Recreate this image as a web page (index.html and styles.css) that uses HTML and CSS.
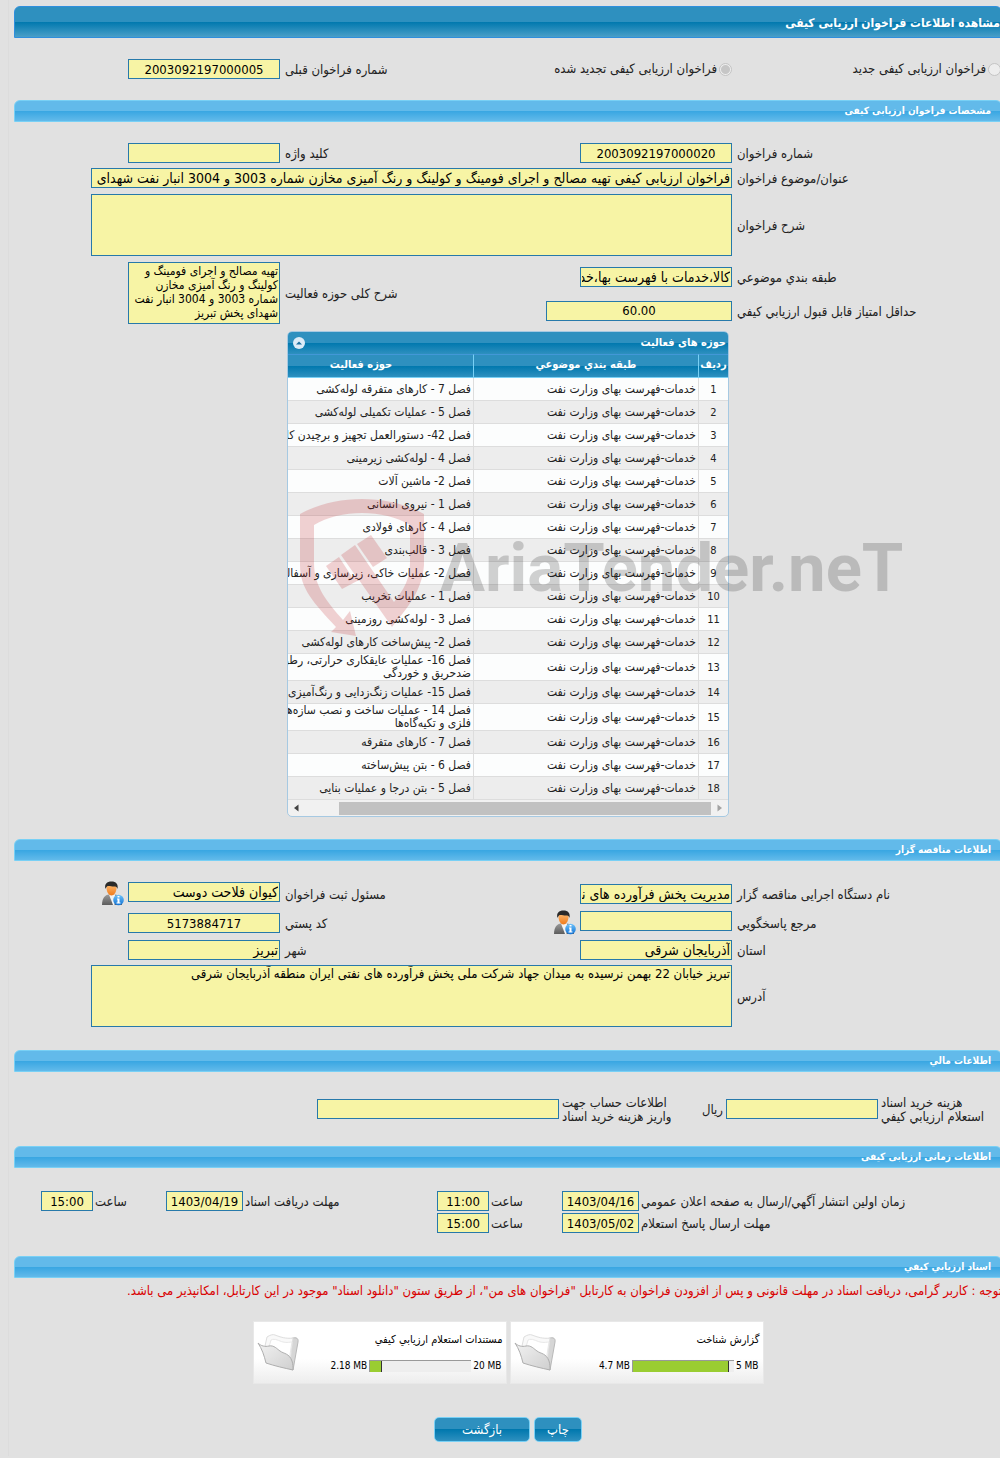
FILE: index.html
```html
<!DOCTYPE html>
<html lang="fa" dir="rtl">
<head>
  <meta charset="UTF-8" />
  <meta name="viewport" content="width=device-width, initial-scale=1.0"/>
  <title>مشاهده اطلاعات فراخوان ارزیابی کیفی</title>
  <link rel="stylesheet" href="styles.css">
</head>
<body>
  <svg class="defs" aria-hidden="true">
    <defs>
      <linearGradient id="g-folder" x1="0" y1="0" x2="1" y2="1">
        <stop offset="0" stop-color="#f2f2f2"/><stop offset="1" stop-color="#cfcfcf"/>
      </linearGradient>
      <linearGradient id="g-face" x1="0" y1="0" x2="0" y2="1">
        <stop offset="0" stop-color="#ffc27a"/><stop offset="1" stop-color="#f07a1a"/>
      </linearGradient>
      <linearGradient id="g-suit" x1="0" y1="0" x2="0" y2="1">
        <stop offset="0" stop-color="#9a9a9a"/><stop offset="1" stop-color="#5c5c5c"/>
      </linearGradient>
      <linearGradient id="g-info" x1="0" y1="0" x2="0" y2="1">
        <stop offset="0" stop-color="#6fc3fb"/><stop offset="1" stop-color="#1272d4"/>
      </linearGradient>
    </defs>
    <symbol id="person" viewBox="0 0 24 25">
      <path d="M1 24C1 17 4 14 8 13.500L14 13.500C18 14 21 17 21 24Z" fill="url(#g-suit)"/>
      <path d="M8 13.500L14 13.500L13.500 24L12 24Z" fill="#f4f4f4"/>
      <path d="M5.500 7C5.500 3 7.500 2 10.500 2S15.500 3 15.500 7C15.500 11 13 14.500 10.500 14.500S5.500 11 5.500 7Z" fill="url(#g-face)"/>
      <path d="M4.500 8C3 3 6 0.500 10.500 0.500S17.500 3 16.500 8C16 6 15 5.500 13 5.500C10 5.500 7 4.500 6 5.500C5 6.500 5 7 4.500 8Z" fill="#2a2a2a"/>
      <circle cx="17.500" cy="19" r="5.300" fill="url(#g-info)"/>
      <path d="M16 17.500H18.500V21.500H19.500V22.500H15.500V21.500H16.500V18.500H16ZM16.500 15H18.500V16.500H16.500Z" fill="#fff"/>
    </symbol>
    <symbol id="folder" viewBox="0 0 44 40">
      <path d="M12 8L34 6C37 4 42 4 41 9L36 37L30 34Z" fill="#d6d6d6" stroke="#b9b9b9"/>
      <path d="M8 13L10 4C13 2 16 1 18 2C23 4 29 6 36 5L33 30L12 24Z" fill="#f9f9f9" stroke="#dedede"/>
      <path d="M12 14L14 7C18 5 22 8 26 9C30 10 33 9 35 9L32 28L16 25Z" fill="#fff" stroke="#e8e8e8"/>
      <path d="M1 10C4 13 8 14 12 13C17 12 20 16 23 18C27 21 32 20 35 28C36 31 36 34 36 37C27 35 18 33 9 30C7 22 5 16 1 10Z" fill="url(#g-folder)" stroke="#aeaeae"/>
    </symbol>
  </svg>

  <div class="page">
    <h1 class="title-bar">مشاهده اطلاعات فراخوان ارزیابی کیفی</h1>

    <div class="form-grid type-row">
      <div class="radio first">
        <input type="radio" name="type" id="type-new" disabled>
        <label for="type-new">فراخوان ارزیابی کیفی جدید</label>
      </div>
      <div class="radio">
        <input type="radio" name="type" id="type-renew" checked disabled>
        <label for="type-renew">فراخوان ارزیابی کیفی تجدید شده</label>
      </div>
      <label for="prev-no">شماره فراخوان قبلی</label>
      <input type="text" class="field num" id="prev-no" value="2003092197000005" readonly>
    </div>

    <h2 class="section-bar">مشخصات فراخوان ارزیابی کیفی</h2>
    <div class="form-grid spec">
      <label for="call-no">شماره فراخوان</label>
      <input type="text" class="field num" id="call-no" value="2003092197000020" readonly>
      <label for="keyword">کلید واژه</label>
      <input type="text" class="field" id="keyword" readonly>

      <label for="subject">عنوان/موضوع فراخوان</label>
      <input type="text" class="field wide" id="subject" value="فراخوان ارزیابی کیفی تهیه مصالح و اجرای فومینگ و کولینگ و رنگ آمیزی مخازن شماره 3003 و 3004 انبار نفت شهدای پخش تبریز" readonly>

      <label for="desc">شرح فراخوان</label>
      <textarea class="field wide area" id="desc" readonly></textarea>

      <label for="category">طبقه بندي موضوعي</label>
      <input type="text" class="field" id="category" value="کالا،خدمات با فهرست بها،خدمات" readonly>
      <label for="scope" class="tall">شرح کلی حوزه فعالیت</label>
      <textarea class="field area tall" id="scope" readonly>تهیه مصالح و اجرای فومینگ و کولینگ و رنگ آمیزی مخازن شماره 3003 و 3004 انبار نفت شهدای پخش تبریز</textarea>

      <label for="min-score">حداقل امتیاز قابل قبول ارزیابي کیفي</label>
      <input type="text" class="field num score" id="min-score" value="60.00" readonly>
    </div>

    <div class="panel">
      <div class="panel-title">
        <span>حوزه های فعالیت</span>
        <button type="button" class="collapse" aria-label="بستن">
          <svg viewBox="0 0 12 12"><circle cx="6" cy="6" r="6" fill="#dcebf7"/><path d="M3 7.500L6 4.500L9 7.500Z" fill="#1b6f9f"/></svg>
        </button>
      </div>
      <div class="panel-body">
        <table>
          <thead>
            <tr><th class="c-no">ردیف</th><th class="c-cat">طبقه بندي موضوعي</th><th class="c-act">حوزه فعالیت</th></tr>
          </thead>
          <tbody>
            <tr><td>1</td><td>خدمات-فهرست بهای وزارت نفت</td><td>فصل 7 - کارهای متفرقه لوله‌کشی</td></tr>
            <tr><td>2</td><td>خدمات-فهرست بهای وزارت نفت</td><td>فصل 5 - عملیات تکمیلی لوله‌کشی</td></tr>
            <tr><td>3</td><td>خدمات-فهرست بهای وزارت نفت</td><td>فصل 42- دستورالعمل تجهیز و برچیدن کارگاه</td></tr>
            <tr><td>4</td><td>خدمات-فهرست بهای وزارت نفت</td><td>فصل 4 - لوله‌کشی زیرمینی</td></tr>
            <tr><td>5</td><td>خدمات-فهرست بهای وزارت نفت</td><td>فصل 2- ماشین آلات</td></tr>
            <tr><td>6</td><td>خدمات-فهرست بهای وزارت نفت</td><td>فصل 1 - نیروی انسانی</td></tr>
            <tr><td>7</td><td>خدمات-فهرست بهای وزارت نفت</td><td>فصل 4 - کارهای فولادی</td></tr>
            <tr><td>8</td><td>خدمات-فهرست بهای وزارت نفت</td><td>فصل 3 - قالب‌بندی</td></tr>
            <tr><td>9</td><td>خدمات-فهرست بهای وزارت نفت</td><td>فصل 2- عملیات خاکی، زیرسازی و آسفالت</td></tr>
            <tr><td>10</td><td>خدمات-فهرست بهای وزارت نفت</td><td>فصل 1 - عملیات تخریب</td></tr>
            <tr><td>11</td><td>خدمات-فهرست بهای وزارت نفت</td><td>فصل 3 - لوله‌کشی روزمینی</td></tr>
            <tr><td>12</td><td>خدمات-فهرست بهای وزارت نفت</td><td>فصل 2- پیش‌ساخت کارهای لوله‌کشی</td></tr>
            <tr><td>13</td><td>خدمات-فهرست بهای وزارت نفت</td><td>فصل 16- عملیات عایقکاری حرارتی، رطوبتی،<br>ضدحریق و خوردگی</td></tr>
            <tr><td>14</td><td>خدمات-فهرست بهای وزارت نفت</td><td>فصل 15- عملیات زنگ‌زدایی و رنگ‌آمیزی</td></tr>
            <tr><td>15</td><td>خدمات-فهرست بهای وزارت نفت</td><td>فصل 14 - عملیات ساخت و نصب سازه‌های<br>فلزی و تکیه‌گاه‌ها</td></tr>
            <tr><td>16</td><td>خدمات-فهرست بهای وزارت نفت</td><td>فصل 7 - کارهای متفرقه</td></tr>
            <tr><td>17</td><td>خدمات-فهرست بهای وزارت نفت</td><td>فصل 6 - بتن پیش‌ساخته</td></tr>
            <tr><td>18</td><td>خدمات-فهرست بهای وزارت نفت</td><td>فصل 5 - بتن درجا و عملیات بنایی</td></tr>
          </tbody>
        </table>
      </div>
      <div class="scrollbar" aria-hidden="true">
        <svg viewBox="0 0 6 8"><path d="M5.500 0.500V7.500L1 4Z" fill="#444"/></svg>
        <span class="thumb"></span>
        <svg viewBox="0 0 6 8"><path d="M0.500 0.500V7.500L5 4Z" fill="#a3a3a3"/></svg>
      </div>
      <div class="watermark" aria-hidden="true">
        <svg viewBox="0 0 126 138">
          <g fill="#bf2228">
            <path d="M0 15C36-5 88-5 124 15V66C122 92 108 108 92 128L59 81L42 90L26 67L39 58L52 78L55 76L41 56L55 46L94 103C104 90 110 80 110 64V26C84 10 40 10 14 26V64C14 88 28 104 43 121L50 112L56 137L31 133L36 128C14 104 0 90 0 66Z"/>
            <path d="M57 45L71 36L87 59L73 68Z"/>
          </g>
        </svg>
        <span>AriaTender.neT</span>
      </div>
    </div>

    <h2 class="section-bar">اطلاعات مناقصه گزار</h2>
    <div class="form-grid bidder">
      <label for="org">نام دستگاه اجرایی مناقصه گزار</label>
      <input type="text" class="field" id="org" value="مدیریت پخش فرآورده های نفتی" readonly>
      <label for="registrar">مسئول ثبت فراخوان</label>
      <div class="with-icon">
        <input type="text" class="field" id="registrar" value="کیوان فلاحت دوست" readonly>
        <button type="button" class="icon-btn" aria-label="اطلاعات مسئول"><svg><use href="#person"/></svg></button>
      </div>

      <label for="contact">مرجع پاسخگویي</label>
      <div class="with-icon">
        <input type="text" class="field" id="contact" readonly>
        <button type="button" class="icon-btn" aria-label="اطلاعات مرجع"><svg><use href="#person"/></svg></button>
      </div>
      <label for="postal">کد پستي</label>
      <input type="text" class="field num" id="postal" value="5173884717" readonly>

      <label for="province">استان</label>
      <input type="text" class="field" id="province" value="آذربایجان شرقی" readonly>
      <label for="city">شهر</label>
      <input type="text" class="field" id="city" value="تبریز" readonly>

      <label for="address">آدرس</label>
      <textarea class="field wide area" id="address" readonly>تبریز خیابان 22 بهمن نرسیده به میدان جهاد شرکت ملی پخش فرآورده های نفتی ایران منطقه آذربایجان شرقی</textarea>
    </div>

    <h2 class="section-bar">اطلاعات مالي</h2>
    <div class="finance">
      <label for="doc-cost" class="cost-label"><span>هزینه خرید اسناد<br>استعلام ارزیابي کیفي</span></label>
      <input type="text" class="field" id="doc-cost" readonly>
      <div class="account-label">
        <span>ریال</span>
        <label for="account">اطلاعات حساب جهت<br>واریز هزینه خرید اسناد</label>
      </div>
      <input type="text" class="field account" id="account" readonly>
    </div>

    <h2 class="section-bar">اطلاعات زمانی ارزیابی کیفی</h2>
    <div class="times">
      <label for="pub-date">زمان اولین انتشار آگهي/ارسال به صفحه اعلان عمومي</label>
      <input type="text" class="field num" id="pub-date" value="1403/04/16" readonly>
      <label for="pub-time">ساعت</label>
      <input type="text" class="field num" id="pub-time" value="11:00" readonly>
      <label for="get-date">مهلت دریافت اسناد</label>
      <input type="text" class="field num" id="get-date" value="1403/04/19" readonly>
      <label for="get-time">ساعت</label>
      <input type="text" class="field num" id="get-time" value="15:00" readonly>

      <label for="send-date" class="row-start">مهلت ارسال پاسخ استعلام</label>
      <input type="text" class="field num" id="send-date" value="1403/05/02" readonly>
      <label for="send-time">ساعت</label>
      <input type="text" class="field num" id="send-time" value="15:00" readonly>
    </div>

    <h2 class="section-bar">اسناد ارزیابي کیفي</h2>
    <p class="notice">توجه : کاربر گرامی، دریافت اسناد در مهلت قانونی و پس از افزودن فراخوان به کارتابل "فراخوان های من"، از طریق ستون "دانلود اسناد" موجود در این کارتابل، امکانپذیر می باشد.</p>

    <div class="docs">
      <div class="doc">
        <div class="doc-info">
          <div class="doc-name">گزارش شناخت</div>
          <div class="usage"><span>4.7 MB</span><div class="bar"><div class="fill" style="width: 95%"></div></div><span>5 MB</span></div>
        </div>
        <svg><use href="#folder"/></svg>
      </div>
      <div class="doc">
        <div class="doc-info">
          <div class="doc-name">مستندات استعلام ارزیابي کیفي</div>
          <div class="usage"><span>2.18 MB</span><div class="bar"><div class="fill" style="width: 12%"></div></div><span>20 MB</span></div>
        </div>
        <svg><use href="#folder"/></svg>
      </div>
    </div>

    <div class="actions">
      <button type="button" class="btn">چاپ</button>
      <button type="button" class="btn back">بازگشت</button>
    </div>
  </div>
</body>
</html>
```
FILE: styles.css
```css
* {
  box-sizing: border-box;
}
body {
  margin: 0;
  background: #e1e1e1;
  color: #222;
  font-family: Tahoma, "DejaVu Sans Condensed", "DejaVu Sans", sans-serif;
  font-size: 13px;
  line-height: 14px;
  overflow-x: hidden;
}
.defs {
  position: absolute;
  width: 0;
  height: 0;
}
.page {
  margin: 0 -2px 0 8px;
  padding: 6px 0 14px 5px;
  border-left: 1px solid #dcdcdc;
}
input,
textarea,
button {
  font-family: inherit;
  margin: 0;
}

/* Headings */
.title-bar {
  height: 32px;
  margin: 0;
  padding: 0 1px;
  border: 1px solid #2f8fdd;
  border-radius: 6px 6px 0 0;
  background: linear-gradient(#2e90bf 0, #2e90bf 50%, #0078ae 50%, #4a9fc8 100%);
  color: #fff;
  font-size: 12px;
  line-height: 32px;
}
.section-bar {
  height: 22px;
  margin: 0;
  padding: 0 10px;
  border: 1px solid #78d0f5;
  border-radius: 6px 6px 0 0;
  background: linear-gradient(#62baea 0, #62baea 50%, #38a6e2 50%, #62baea 100%);
  color: #fff;
  font-size: 10px;
  line-height: 20px;
}

/* Form fields */
.field {
  display: block;
  width: 152px;
  height: 20px;
  padding: 0 1px;
  border: 1px solid #2779aa;
  border-radius: 0;
  background: #f7f4a5;
  color: #000;
  font-size: 14px;
  outline: none;
}
.num {
  font-size: 13px;
  text-align: center;
}
.wide {
  grid-column: span 3;
  width: 641px;
}
.area {
  height: 62px;
  padding: 1px;
  font-size: 13px;
  line-height: 14px;
  resize: none;
  overflow: hidden;
}
.score {
  width: 186px;
}
.form-grid {
  display: grid;
  grid-template-columns: 270fr 272fr 180fr 266fr;
  row-gap: 5px;
  align-items: center;
}
/* labels hug the field that stands left of them */
.form-grid > label {
  justify-self: end;
  padding: 2px 0 0 5px;
}
.type-row {
  padding: 21px 0;
}
.radio {
  display: flex;
  align-items: center;
  gap: 2px;
}
.radio.first {
  padding-right: 1px;
}
.radio input {
  appearance: none;
  width: 13px;
  height: 13px;
  border: 1px solid #c4c4c4;
  border-radius: 50%;
  background: #ededed;
}
.radio input:checked {
  background: radial-gradient(circle, #c6c6c6 0, #c6c6c6 4px, #ededed 5px);
}
.spec {
  padding: 21px 0 7px;
  grid-template-rows: 20px 20px 64px 30px 27px;
}
.tall {
  grid-row: 4 / span 2;
}
label.tall {
  grid-column: 3;
}
.area.tall {
  grid-column: 4;
  font-size: 12px;
}

/* Activity table */
.panel {
  position: relative;
  width: 442px;
  margin: 0 auto 22px;
  border: 1px solid #a6c9e2;
  border-radius: 5px;
  background: #f1f1f1;
}
.panel-title {
  display: flex;
  justify-content: space-between;
  align-items: center;
  height: 22px;
  padding: 0 2px 0 5px;
  border-radius: 4px 4px 0 0;
  background: linear-gradient(#2e90bf 0, #2e90bf 50%, #0078ae 50%, #2e90bf 100%);
  color: #fff;
  font-size: 11px;
  font-weight: bold;
}
.collapse {
  width: 12px;
  height: 12px;
  padding: 0;
  border: 0;
  background: none;
}
.collapse svg {
  display: block;
}
.panel-body {
  overflow: hidden;
}
table {
  width: 480px;
  table-layout: fixed;
  border-collapse: separate;
  border-spacing: 0;
}
.c-no {
  width: 30px;
}
.c-cat,
.c-act {
  width: 225px;
}
th {
  height: 24px;
  padding: 0 0 3px;
  border-left: 1px solid #78d0f5;
  border-top: 1px solid #4297d7;
  border-bottom: 1px solid #78d0f5;
  background: linear-gradient(#2e90bf 0, #2e90bf 50%, #0078ae 50%, #2e90bf 100%);
  color: #fff;
  font-size: 11px;
  white-space: nowrap;
}
td {
  height: 23px;
  padding: 0 2px;
  border-left: 1px solid #ddd;
  border-bottom: 1px solid #ddd;
  background: #fcfdfd;
  font-size: 12px;
  line-height: 13px;
  white-space: nowrap;
}
tr:nth-child(even) td {
  background: #ededed;
}
td:first-child {
  font-size: 11px;
  text-align: center;
}
.scrollbar {
  display: flex;
  align-items: center;
  justify-content: space-between;
  direction: ltr;
  height: 16px;
  padding: 0 5px;
}
.scrollbar svg {
  width: 6px;
  height: 8px;
}
.scrollbar .thumb {
  width: 372px;
  height: 13px;
  margin-left: 34px;
  background: #c1c1c1;
}
.watermark {
  position: absolute;
  top: 167px;
  left: 12px;
  display: flex;
  align-items: center;
  gap: 14px;
  direction: ltr;
  opacity: 0.2;
  pointer-events: none;
}
.watermark svg {
  width: 126px;
  height: 138px;
}
.watermark span {
  color: #222;
  font-family: Roboto, "Liberation Sans", sans-serif;
  font-size: 67px;
  font-weight: bold;
  line-height: 96px;
}

/* Bidder */
.bidder {
  padding: 20px 0 23px;
  grid-template-rows: 25px 24px 20px 62px;
}
.with-icon {
  display: flex;
  align-items: flex-start;
  gap: 3px;
}
.icon-btn {
  width: 24px;
  height: 25px;
  margin: -1px 0 0;
  padding: 0;
  border: 0;
  background: none;
}
.icon-btn svg {
  display: block;
  width: 24px;
  height: 25px;
}

/* Money */
.finance {
  display: flex;
  align-items: center;
  height: 74px;
}
.finance label {
  text-align: left;
}
.cost-label {
  width: 124px;
  padding: 2px 0 0 3px;
}
.account-label {
  display: flex;
  align-items: center;
  justify-content: space-between;
  width: 167px;
  padding: 2px 3px 0;
}
.field.account {
  width: 242px;
}

/* Dates */
.times {
  display: grid;
  grid-template-columns: 363fr 77px 73fr 52px 194fr 77px 73fr 52px 27fr;
  row-gap: 2px;
  align-items: center;
  padding: 23px 0;
}
.times .field {
  width: 100%;
}
.times label {
  padding: 2px 0 0 2px;
  text-align: left;
}
.times .row-start {
  grid-column: 1;
}

/* Documents */
.notice {
  margin: 6px 0 23px;
  color: #d90000;
  white-space: nowrap;
}
.docs {
  display: flex;
  justify-content: center;
  gap: 3px;
}
.doc {
  display: flex;
  align-items: center;
  justify-content: space-between;
  width: 254px;
  height: 63px;
  padding: 0 3px;
  background: linear-gradient(#fff 0, #fff 60%, #ededed 100%);
  border: 1px solid #e8e8e8;
}
.doc svg {
  width: 44px;
  height: 40px;
}
.doc-name {
  margin-bottom: 12px;
  font-size: 11px;
  color: #000;
}
.usage {
  display: flex;
  align-items: center;
  justify-content: flex-end;
  gap: 2px;
  direction: ltr;
  padding-right: 1px;
  color: #000;
  font-size: 10px;
}
.bar {
  width: 102px;
  height: 12px;
  border-top: 1px solid #999;
  border-left: 1px solid #999;
  background: #eee;
}
.fill {
  height: 100%;
  border-right: 1px solid #333;
  background: #9acd32;
}
.actions {
  display: flex;
  justify-content: center;
  gap: 4px;
  margin-top: 33px;
}
.btn {
  width: 48px;
  height: 25px;
  padding: 0;
  border: 1px solid #78d0f5;
  border-radius: 5px;
  background: linear-gradient(#2e90bf 0, #2e90bf 50%, #0078ae 50%, #2e90bf 100%);
  color: #fff;
  font-size: 13px;
}
.btn.back {
  width: 96px;
}
```
